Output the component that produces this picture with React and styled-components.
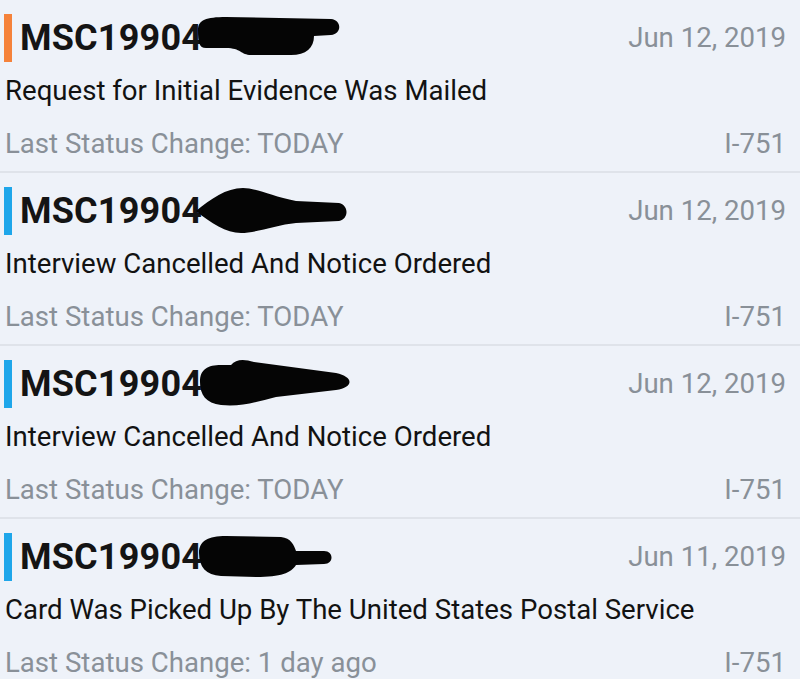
import React from "react";
import styled, { createGlobalStyle } from "styled-components";

const GlobalStyle = createGlobalStyle`
  html, body {
    margin: 0;
    padding: 0;
    background: #eef2f9;
    font-family: Roboto, "Liberation Sans", sans-serif;
  }
`;

const cases = [
  {
    color: "#f5823b",
    date: "Jun 12, 2019",
    status: "Request for Initial Evidence Was Mailed",
    changed: "TODAY",
    blob: "M2,18 C2,8 10,5 30,5 L135,7 C146,8 146,22 135,23 L118,24 C118,36 110,43 95,43 L55,43 C45,43 45,36 30,36 L10,36 C3,36 2,30 2,18 Z",
  },
  {
    color: "#1ea6ea",
    date: "Jun 12, 2019",
    status: "Interview Cancelled And Notice Ordered",
    changed: "TODAY",
    blob: "M0,26 C15,14 30,3 47,3 C60,3 75,11 100,16 L143,18 C153,20 153,34 143,36 L100,38 C80,40 60,48 45,48 C30,48 15,38 0,26 Z",
  },
  {
    color: "#1ea6ea",
    date: "Jun 12, 2019",
    status: "Interview Cancelled And Notice Ordered",
    changed: "TODAY",
    blob: "M4,24 C4,11 12,7 25,7 L35,7 C40,1 48,1 58,4 L140,15 C158,19 158,29 140,32 L80,39 C60,44 45,49 25,47 C10,45 4,37 4,24 Z",
  },
  {
    color: "#1ea6ea",
    date: "Jun 11, 2019",
    status: "Card Was Picked Up By The United States Postal Service",
    changed: "1 day ago",
    blob: "M3,22 C3,10 12,5 30,5 L85,6 C95,7 98,14 100,20 L128,20 C138,20 138,33 128,33 L100,34 C95,42 85,46 60,46 L25,45 C10,44 3,36 3,22 Z",
  },
];

function CaseRow({ item }) {
  return (
    <Row>
      <Header>
        <Bar color={item.color} />
        <Receipt>
          MSC19904
          <Redaction viewBox="0 0 160 52">
            <path d={item.blob} fill="#050505" />
          </Redaction>
        </Receipt>
        <Muted>{item.date}</Muted>
      </Header>
      <Status>{item.status}</Status>
      <Footer>
        <Muted>Last Status Change: {item.changed}</Muted>
        <Muted>I-751</Muted>
      </Footer>
    </Row>
  );
}

export default function App() {
  return (
    <>
      <GlobalStyle />
      <List>
        {cases.map((c, i) => (
          <CaseRow key={i} item={c} />
        ))}
      </List>
    </>
  );
}

const List = styled.div`
  width: 800px;
  height: 679px;
  overflow: hidden;
  background: #eef2f9;
`;

const Row = styled.div`
  height: 173px;
  box-sizing: border-box;
  padding: 14px 14px 0 5px;
  border-bottom: 2px solid #dfe3ea;
  display: flex;
  flex-direction: column;
`;

const Header = styled.div`
  display: flex;
  align-items: center;
  height: 48px;
  margin-left: -1px;
`;

const Bar = styled.div`
  width: 8px;
  height: 48px;
  background: ${(p) => p.color};
  margin-right: 8px;
  flex-shrink: 0;
`;

const Receipt = styled.div`
  flex: 1;
  display: flex;
  align-items: center;
  font-size: 36px;
  font-weight: 700;
  color: #141414;
  letter-spacing: 0.2px;
  line-height: 48px;
`;

const Redaction = styled.svg`
  width: 160px;
  height: 52px;
  margin-left: -6px;
`;

const Muted = styled.div`
  font-size: 27.6px;
  color: #899098;
  line-height: 32px;
`;

const Status = styled.div`
  margin-top: 13px;
  font-size: 27.6px;
  color: #121212;
  line-height: 32px;
`;

const Footer = styled.div`
  margin-top: 21px;
  display: flex;
  justify-content: space-between;
`;
